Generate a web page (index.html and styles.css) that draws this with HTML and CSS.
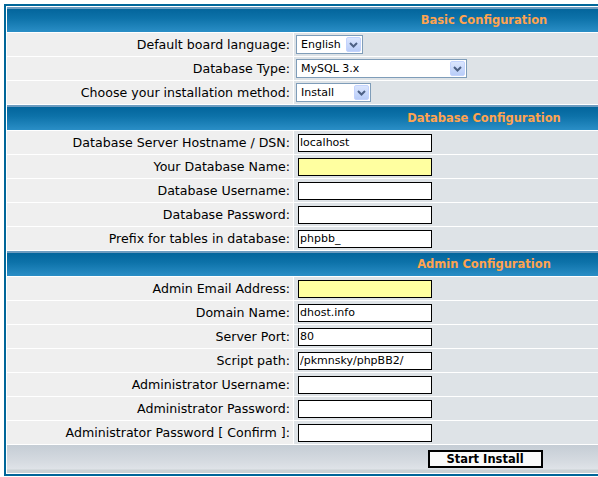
FILE: index.html
```html
<!DOCTYPE html>
<html>
<head>
<meta charset="utf-8">
<title>phpBB Installation</title>
<link rel="stylesheet" href="styles.css">
</head>
<body>
<div class="page">
  <form class="forumline">
    <div class="th">Basic Configuration</div>

    <div class="row1"><span class="gen">Default board language:</span></div>
    <div class="row2 sel-cell"><div class="select w-lang"><span class="sel-text">English</span><span class="arrow"><svg width="9" height="6" viewBox="0 0 9 6"><path d="M1 1 L4.5 4.5 L8 1" fill="none" stroke="#4d6185" stroke-width="2"/></svg></span></div></div>

    <div class="row1"><span class="gen">Database Type:</span></div>
    <div class="row2 sel-cell"><div class="select w-db"><span class="sel-text">MySQL 3.x</span><span class="arrow"><svg width="9" height="6" viewBox="0 0 9 6"><path d="M1 1 L4.5 4.5 L8 1" fill="none" stroke="#4d6185" stroke-width="2"/></svg></span></div></div>

    <div class="row1"><span class="gen">Choose your installation method:</span></div>
    <div class="row2 sel-cell"><div class="select w-inst"><span class="sel-text">Install</span><span class="arrow"><svg width="9" height="6" viewBox="0 0 9 6"><path d="M1 1 L4.5 4.5 L8 1" fill="none" stroke="#4d6185" stroke-width="2"/></svg></span></div></div>

    <div class="th">Database Configuration</div>

    <div class="row1"><span class="gen">Database Server Hostname / DSN:</span></div>
    <div class="row2"><input class="post" type="text" value="localhost"></div>

    <div class="row1"><span class="gen">Your Database Name:</span></div>
    <div class="row2"><input class="post auto" type="text" value=""></div>

    <div class="row1"><span class="gen">Database Username:</span></div>
    <div class="row2"><input class="post" type="text" value=""></div>

    <div class="row1"><span class="gen">Database Password:</span></div>
    <div class="row2"><input class="post" type="password" value=""></div>

    <div class="row1"><span class="gen">Prefix for tables in database:</span></div>
    <div class="row2"><input class="post" type="text" value="phpbb_"></div>

    <div class="th">Admin Configuration</div>

    <div class="row1"><span class="gen">Admin Email Address:</span></div>
    <div class="row2"><input class="post auto" type="text" value=""></div>

    <div class="row1"><span class="gen">Domain Name:</span></div>
    <div class="row2"><input class="post" type="text" value="dhost.info"></div>

    <div class="row1"><span class="gen">Server Port:</span></div>
    <div class="row2"><input class="post" type="text" value="80"></div>

    <div class="row1"><span class="gen">Script path:</span></div>
    <div class="row2"><input class="post" type="text" value="/pkmnsky/phpBB2/"></div>

    <div class="row1"><span class="gen">Administrator Username:</span></div>
    <div class="row2"><input class="post" type="text" value=""></div>

    <div class="row1"><span class="gen">Administrator Password:</span></div>
    <div class="row2"><input class="post" type="password" value=""></div>

    <div class="row1"><span class="gen">Administrator Password [ Confirm ]:</span></div>
    <div class="row2"><input class="post" type="password" value=""></div>

    <div class="catBottom"><button type="button" class="mainoption">Start Install</button></div>
  </form>
</div>
</body>
</html>
```

FILE: styles.css
```css
html, body {
  margin: 0;
  padding: 0;
  background: #ffffff;
}

.page {
  box-sizing: border-box;
  width: 598px;
  height: 477px;
  overflow: hidden;
  padding: 4px 0 0 4px;
}

.forumline {
  box-sizing: border-box;
  width: 960px;
  margin: 0;
  border: 2px solid #006699;
  background: #ffffff;
  padding: 1px;
  display: grid;
  grid-template-columns: 286px 1fr;
  gap: 1px;
  font-family: "DejaVu Sans", Verdana, sans-serif;
}

.th {
  grid-column: 1 / -1;
  height: 25px;
  display: flex;
  align-items: center;
  justify-content: center;
  color: #ffa34f;
  font-size: 11.5px;
  font-weight: bold;
  background: linear-gradient(#6d9cc0 0, #6d9cc0 2px, #03659c 2px, #0d72a9 45%, #2a8ec6 100%);
}

.row1 {
  height: 23px;
  background: #efefef;
  display: flex;
  align-items: center;
  justify-content: flex-end;
  padding: 0 3px 0 4px;
}

.row2 {
  height: 23px;
  background: #dee3e7;
  display: flex;
  align-items: center;
  padding: 0 4px;
}

.sel-cell {
  padding-left: 2px;
}

.gen {
  font-size: 12.6px;
  color: #000000;
  white-space: nowrap;
}

.post {
  box-sizing: border-box;
  width: 134px;
  height: 18px;
  margin: 0;
  border: 1px solid #000000;
  background: #ffffff;
  padding: 0 1px;
  font-family: "DejaVu Sans", Verdana, sans-serif;
  font-size: 11px;
  color: #000000;
  outline: none;
}

.post.auto {
  background: #ffffa0;
}

.select {
  box-sizing: border-box;
  height: 19px;
  border: 1px solid #7f9db9;
  background: #ffffff;
  display: flex;
  align-items: stretch;
  padding: 1px;
}

.w-lang { width: 67px; }
.w-db { width: 171px; }
.w-inst { width: 75px; }

.sel-text {
  flex: 1;
  font-size: 11px;
  line-height: 15px;
  padding-left: 3px;
  color: #000000;
  white-space: nowrap;
}

.arrow {
  width: 15px;
  box-sizing: border-box;
  border: 1px solid #c3d3fd;
  border-radius: 2px;
  background: linear-gradient(#dbe6fe, #b9cdf8);
  display: flex;
  align-items: center;
  justify-content: center;
}

.catBottom {
  grid-column: 1 / -1;
  height: 28px;
  display: flex;
  align-items: center;
  justify-content: center;
  background: linear-gradient(#c5cdd5 0, #d6dbe1 60%, #dfe3e8 24px, #c9d1d4 25px, #c9d1d4 100%);
}

.mainoption {
  box-sizing: border-box;
  width: 115px;
  height: 18px;
  margin: 0 0 0 2px;
  padding: 0;
  border: 2px solid #000000;
  background: #fafafa;
  font-family: "DejaVu Sans", Verdana, sans-serif;
  font-size: 11.5px;
  font-weight: bold;
  color: #000000;
}
```
